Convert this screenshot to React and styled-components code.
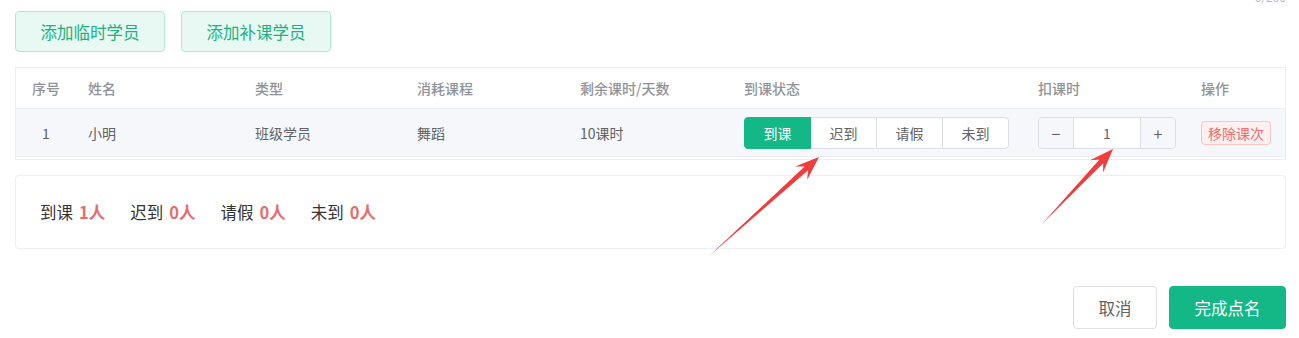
import React, { useState } from "react";
import styled, { createGlobalStyle } from "styled-components";

const GlobalStyle = createGlobalStyle`
  html, body {
    margin: 0;
    padding: 0;
    background: #fff;
    font-family: "Noto Sans CJK SC", "Noto Sans", "Liberation Sans", sans-serif;
  }
  * {
    box-sizing: border-box;
  }
`;

const Page = styled.div`
  position: relative;
  width: 1299px;
  height: 338px;
  padding: 0 13px 0 15px;
  overflow: hidden;
`;

// 右上角字数提示（被上边缘截掉一半）
const TopBar = styled.div`
  display: flex;
  justify-content: flex-end;
  height: 11px;
`;

const CountHint = styled.span`
  margin-top: -10px;
  font-size: 12px;
  line-height: 14px;
  color: #b8bcc4;
`;

const ButtonRow = styled.div`
  display: flex;
  gap: 16px;
`;

const AddButton = styled.button`
  height: 41px;
  width: 150px;
  padding: 0;
  border: 1px solid #b2e8d3;
  border-radius: 4px;
  background: #e8f8f2;
  color: #1cb27f;
  font-family: inherit;
  font-size: 16.5px;
  cursor: pointer;
`;

const Table = styled.div`
  margin-top: 15px;
  border: 1px solid #ebeef5;
  padding-bottom: 2px;
`;

const cols = "60px 167px 162px 163px 164px 294px 163px 1fr";

const HeadRow = styled.div`
  display: grid;
  grid-template-columns: ${cols};
  height: 41px;
  align-items: center;
  border-bottom: 1px solid #ebeef5;
`;

const BodyRow = styled.div`
  display: grid;
  grid-template-columns: ${cols};
  height: 48px;
  align-items: center;
  background: #f5f7fa;
  border-bottom: 1px solid #ebeef5;
`;

const HeadCell = styled.div`
  padding-left: ${(p) => (p.$center ? 0 : 12)}px;
  text-align: ${(p) => (p.$center ? "center" : "left")};
  font-size: 14px;
  font-weight: 500;
  color: #909399;
`;

const Cell = styled.div`
  padding-left: ${(p) => (p.$center ? 0 : 12)}px;
  font-size: 14px;
  color: #606266;
  display: flex;
  justify-content: ${(p) => (p.$center ? "center" : "flex-start")};
  align-items: center;
`;

const Segment = styled.div`
  display: flex;
  height: 32px;
`;

const SegButton = styled.button`
  width: 67px;
  height: 32px;
  padding: 0;
  margin-left: -1px;
  border: 1px solid ${(p) => (p.$active ? "#13b886" : "#dcdfe6")};
  background: ${(p) => (p.$active ? "#13b886" : "#fff")};
  color: ${(p) => (p.$active ? "#fff" : "#606266")};
  font-family: inherit;
  font-size: 14px;
  cursor: pointer;
  position: relative;
  z-index: ${(p) => (p.$active ? 1 : 0)};

  &:first-child {
    margin-left: 0;
    border-radius: 4px 0 0 4px;
  }
  &:last-child {
    border-radius: 0 4px 4px 0;
  }
`;

const Stepper = styled.div`
  display: flex;
  width: 138px;
  height: 32px;
  border: 1px solid #dcdfe6;
  border-radius: 4px;
  overflow: hidden;
`;

const StepBtn = styled.button`
  width: 35px;
  padding: 0;
  border: none;
  background: #f5f7fa;
  color: #606266;
  font-family: inherit;
  font-size: 16px;
  cursor: pointer;
  border-${(p) => (p.$side === "left" ? "right" : "left")}: 1px solid #dcdfe6;
`;

const StepValue = styled.div`
  flex: 1;
  background: #fff;
  display: flex;
  align-items: center;
  justify-content: center;
  font-size: 14px;
  color: #606266;
`;

const RemoveTag = styled.span`
  display: inline-flex;
  align-items: center;
  height: 24px;
  padding: 0 6px;
  border: 1px solid #fbc4c4;
  border-radius: 4px;
  background: #fef0f0;
  color: #f56c6c;
  font-size: 14px;
`;

const Summary = styled.div`
  margin-top: 15px;
  height: 74px;
  border: 1px solid #ebeef5;
  border-radius: 4px;
  display: flex;
  align-items: center;
  gap: 25px;
  padding-left: 24px;
`;

const SumItem = styled.span`
  font-size: 16.5px;
  color: #333;

  b {
    margin-left: 6px;
    color: #ea6b6b;
    font-weight: 700;
  }
`;

const Footer = styled.div`
  margin-top: 37px;
  display: flex;
  justify-content: flex-end;
  gap: 12px;
`;

const FootButton = styled.button`
  height: 43px;
  padding: 0;
  width: ${(p) => (p.$primary ? 117 : 84)}px;
  border: 1px solid ${(p) => (p.$primary ? "#13b886" : "#dcdfe6")};
  border-radius: 4px;
  background: ${(p) => (p.$primary ? "#13b886" : "#fff")};
  color: ${(p) => (p.$primary ? "#fff" : "#606266")};
  font-family: inherit;
  font-size: 16.5px;
  cursor: pointer;
`;

// 标注箭头
const Arrows = styled.svg`
  position: absolute;
  left: 0;
  top: 0;
  pointer-events: none;
`;

const Arrow = ({ x1, y1, x2, y2 }) => {
  const dx = x2 - x1;
  const dy = y2 - y1;
  const len = Math.sqrt(dx * dx + dy * dy);
  const ux = dx / len;
  const uy = dy / len;
  const px = -uy;
  const py = ux;
  const headLen = 24;
  const bx = x2 - ux * headLen;
  const by = y2 - uy * headLen;
  const nx = x2 - ux * (headLen - 7);
  const ny = y2 - uy * (headLen - 7);
  const pts = [
    [x1, y1],
    [nx + px * 2.6, ny + py * 2.6],
    [bx + px * 9, by + py * 9],
    [x2, y2],
    [bx - px * 9, by - py * 9],
    [nx - px * 2.6, ny - py * 2.6],
  ];
  return (
    <polygon
      points={pts.map((p) => p.join(",")).join(" ")}
      fill="#f03c3c"
    />
  );
};

const statusList = ["到课", "迟到", "请假", "未到"];

const App = () => {
  const [status, setStatus] = useState("到课");
  const [count, setCount] = useState(1);

  return (
    <Page>
      <GlobalStyle />
      <TopBar>
        <CountHint>0/200</CountHint>
      </TopBar>
      <ButtonRow>
        <AddButton>添加临时学员</AddButton>
        <AddButton>添加补课学员</AddButton>
      </ButtonRow>

      <Table>
        <HeadRow>
          <HeadCell $center>序号</HeadCell>
          <HeadCell>姓名</HeadCell>
          <HeadCell>类型</HeadCell>
          <HeadCell>消耗课程</HeadCell>
          <HeadCell>剩余课时/天数</HeadCell>
          <HeadCell>到课状态</HeadCell>
          <HeadCell>扣课时</HeadCell>
          <HeadCell>操作</HeadCell>
        </HeadRow>
        <BodyRow>
          <Cell $center>1</Cell>
          <Cell>小明</Cell>
          <Cell>班级学员</Cell>
          <Cell>舞蹈</Cell>
          <Cell>10课时</Cell>
          <Cell>
            <Segment>
              {statusList.map((s) => (
                <SegButton
                  key={s}
                  $active={status === s}
                  onClick={() => setStatus(s)}
                >
                  {s}
                </SegButton>
              ))}
            </Segment>
          </Cell>
          <Cell>
            <Stepper>
              <StepBtn $side="left" onClick={() => setCount(Math.max(0, count - 1))}>
                −
              </StepBtn>
              <StepValue>{count}</StepValue>
              <StepBtn $side="right" onClick={() => setCount(count + 1)}>
                +
              </StepBtn>
            </Stepper>
          </Cell>
          <Cell>
            <RemoveTag>移除课次</RemoveTag>
          </Cell>
        </BodyRow>
      </Table>

      <Summary>
        <SumItem>
          到课<b>1人</b>
        </SumItem>
        <SumItem>
          迟到<b>0人</b>
        </SumItem>
        <SumItem>
          请假<b>0人</b>
        </SumItem>
        <SumItem>
          未到<b>0人</b>
        </SumItem>
      </Summary>

      <Footer>
        <FootButton>取消</FootButton>
        <FootButton $primary>完成点名</FootButton>
      </Footer>

      <Arrows width="1299" height="338">
        <Arrow x1={708} y1={257} x2={819} y2={157} />
        <Arrow x1={1042} y1={224} x2={1113} y2={149} />
      </Arrows>
    </Page>
  );
};

export default App;
